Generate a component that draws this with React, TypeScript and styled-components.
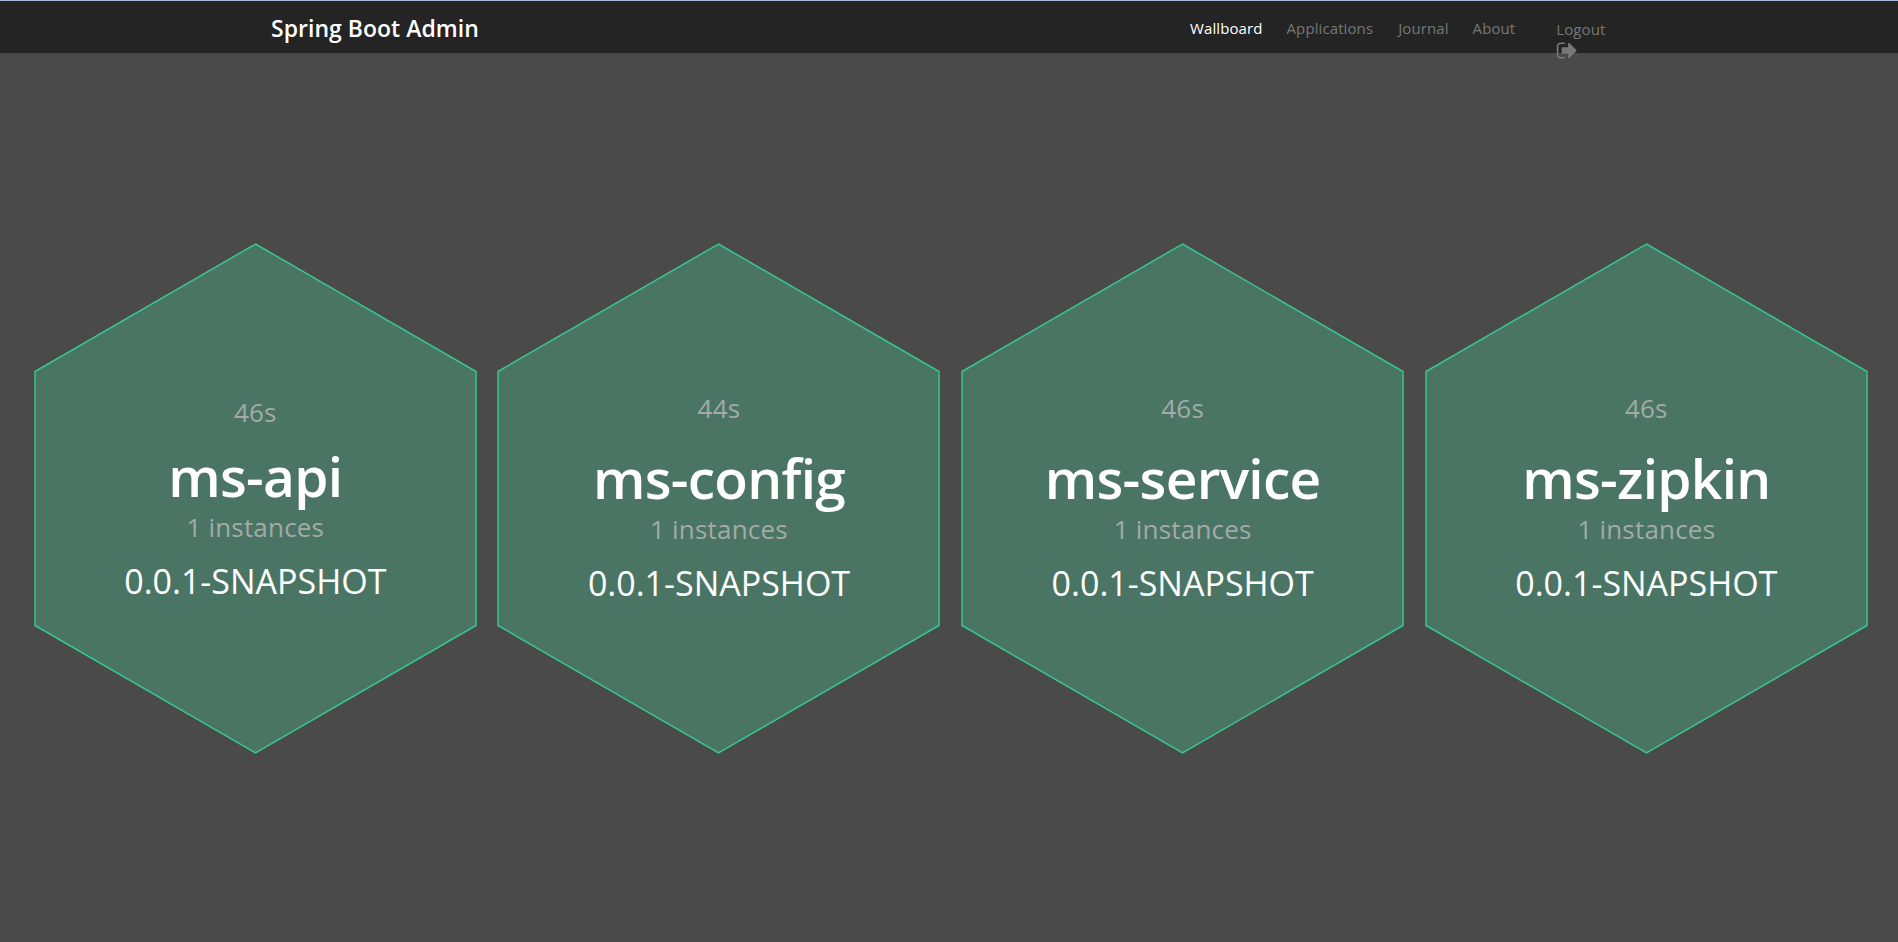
import * as React from 'react';
import styled, { createGlobalStyle } from 'styled-components';

const GlobalStyle = createGlobalStyle`
  html, body {
    margin: 0;
    height: 100%;
    background: #4a4a4a;
    font-family: 'Open Sans', 'Noto Sans', sans-serif;
  }
`;

const Page = styled.div`
  min-height: 942px;
  display: flex;
  flex-direction: column;
  background: #4a4a4a;
`;

const Navbar = styled.nav`
  height: 52px;
  flex: 0 0 auto;
  box-sizing: content-box;
  border-top: 1px solid #a9bcdc;
  background: #242424;
  display: flex;
  align-items: flex-start;
  padding-left: 271px;
`;

const Brand = styled.a`
  width: 919px;
  color: #fff;
  font-size: 23px;
  font-weight: 600;
  line-height: 54px;
  letter-spacing: 0.02px;
`;

const NavList = styled.ul`
  display: flex;
  margin: 0;
  padding: 0;
  list-style: none;
`;

const NavItem = styled.li<{ $active?: boolean; $gap: number }>`
  color: ${({ $active }) => ($active ? '#fff' : '#777')};
  font-size: 15px;
  line-height: 54px;
  letter-spacing: 0.1px;
  margin-right: ${({ $gap }) => $gap}px;
`;

const Logout = styled.li`
  color: #777;
  font-size: 15px;
  letter-spacing: 0.1px;
  display: flex;
  flex-direction: column;
  padding-top: 18px;
  line-height: 20px;
`;

const LogoutIcon = styled.svg`
  display: block;
  width: 21px;
  height: 23px;
  fill: #777;
`;

const Board = styled.main`
  flex: 1;
  display: grid;
  grid-template-columns: repeat(4, 441px);
  column-gap: 22.7px;
  align-content: start;
  padding: 191px 0 0 34.8px;
`;

const Cell = styled.section`
  display: grid;
  width: 441px;
  height: 509px;
`;

const Hexagon = styled.svg`
  grid-area: 1 / 1;
  width: 441px;
  height: 509px;
  overflow: visible;
`;

const HexShape = styled.polygon`
  fill: #4a7565;
  stroke: #38c595;
  stroke-width: 1.5;
`;

const Content = styled.div<{ $top: number }>`
  grid-area: 1 / 1;
  display: flex;
  flex-direction: column;
  align-items: center;
  padding-top: ${({ $top }) => $top}px;
  z-index: 1;
`;

const Uptime = styled.div<{ $after: number }>`
  color: #a3aaa7;
  font-size: 26px;
  line-height: 34px;
  letter-spacing: 0.2px;
  margin-bottom: ${({ $after }) => $after}px;
`;

const Name = styled.h2`
  margin: 0;
  color: #fff;
  font-size: 55px;
  font-weight: 600;
  line-height: 66px;
  letter-spacing: -0.7px;
`;

const Instances = styled.div`
  color: #a3aaa7;
  font-size: 26px;
  line-height: 34px;
  letter-spacing: 0.2px;
  margin-top: 1px;
`;

const Version = styled.div`
  color: #fff;
  font-size: 34px;
  line-height: 44px;
  letter-spacing: 0;
  margin-top: 15px;
`;

const apps = [
  { name: 'ms-api', uptime: '46s', top: 151, after: 14 },
  { name: 'ms-config', uptime: '44s', top: 147, after: 20 },
  { name: 'ms-service', uptime: '46s', top: 147, after: 20 },
  { name: 'ms-zipkin', uptime: '46s', top: 147, after: 20 },
];

const App = () => (
  <Page>
    <GlobalStyle />
    <Navbar>
      <Brand>Spring Boot Admin</Brand>
      <NavList>
        <NavItem $active $gap={24}>Wallboard</NavItem>
        <NavItem $gap={25}>Applications</NavItem>
        <NavItem $gap={24}>Journal</NavItem>
        <NavItem $gap={41}>About</NavItem>
        <Logout>
          Logout
          <LogoutIcon viewBox="0 0 1664 1792">
            <path d="M704 1440q0 4 1 20t.5 26.5-3 23.5-10 19.5-20.5 6.5h-320q-119 0-203.5-84.5t-84.5-203.5v-704q0-119 84.5-203.5t203.5-84.5h320q13 0 22.5 9.5t9.5 22.5q0 4 1 20t.5 26.5-3 23.5-10 19.5-20.5 6.5h-320q-66 0-113 47t-47 113v704q0 66 47 113t113 47h312l11.5 1 11.5 3 8 5.5 7 9 2 13.5zm928-544q0 26-19 45l-544 544q-19 19-45 19t-45-19-19-45v-288h-448q-26 0-45-19t-19-45v-384q0-26 19-45t45-19h448v-288q0-26 19-45t45-19 45 19l544 544q19 19 19 45z" />
          </LogoutIcon>
        </Logout>
      </NavList>
    </Navbar>
    <Board>
      {apps.map((app) => (
        <Cell key={app.name}>
          <Hexagon viewBox="0 0 441 509">
            <HexShape points="220.5,0 441,127.5 441,381.5 220.5,509 0,381.5 0,127.5" />
          </Hexagon>
          <Content $top={app.top}>
            <Uptime $after={app.after}>{app.uptime}</Uptime>
            <Name>{app.name}</Name>
            <Instances>1 instances</Instances>
            <Version>0.0.1-SNAPSHOT</Version>
          </Content>
        </Cell>
      ))}
    </Board>
  </Page>
);

export default App;
